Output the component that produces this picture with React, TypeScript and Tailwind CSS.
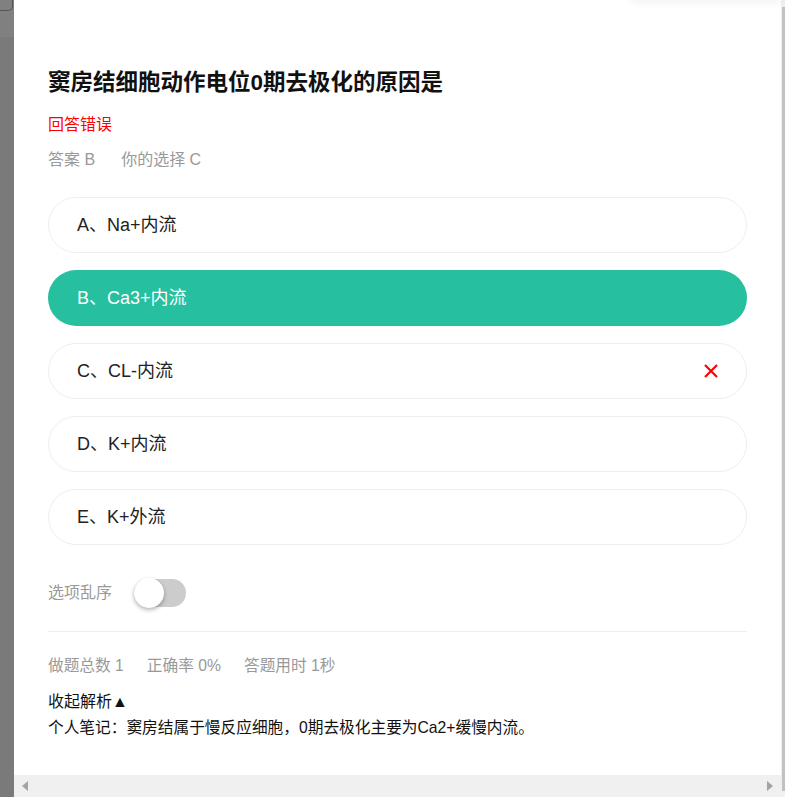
import { useState } from 'react';

const options = [
    { key: 'A', text: 'Na+内流' },
    { key: 'B', text: 'Ca3+内流' },
    { key: 'C', text: 'CL-内流' },
    { key: 'D', text: 'K+内流' },
    { key: 'E', text: 'K+外流' },
];

const answer = 'B';
const chosen = 'C';

export default function App() {
    const [shuffle, setShuffle] = useState(false);

    return (
        <div
            className="w-[785px] h-[797px] flex overflow-hidden bg-white"
            style={{ fontFamily: '"Liberation Sans", "Noto Sans CJK SC", sans-serif' }}
        >
            {/* Dimmed page behind the panel */}
            <div className="w-[14px] flex-shrink-0 flex flex-col bg-[#7a7a7a]">
                <div className="h-[37px] bg-[#808080] relative">
                    <div className="absolute left-0 top-0 w-[13px] h-[11px] border-r border-b border-[#555] rounded-br-[5px]" />
                </div>
            </div>

            <div className="flex-1 flex flex-col min-w-0">
                <div className="flex-1 relative px-[34px] pt-[68px]">
                    {/* faint shadow of a popover above */}
                    <div className="absolute top-[-10px] right-0 w-[150px] h-[10px] shadow-[0_2px_8px_rgba(0,0,0,0.06)]" />

                    <h1 className="text-[22.5px] leading-[30px] font-bold text-[#111]">
                        窦房结细胞动作电位0期去极化的原因是
                    </h1>
                    <div className="mt-[15px] text-[16px] leading-[24px] text-[#ff0000]">回答错误</div>
                    <div className="mt-[11px] text-[16px] leading-[24px] text-[#999] flex">
                        <span className="mr-[26px]">答案 {answer}</span>
                        <span>你的选择 {chosen}</span>
                    </div>

                    <div className="mt-[25px] flex flex-col gap-[17px]">
                        {options.map((o) => {
                            const right = o.key === answer;
                            const wrong = o.key === chosen && !right;
                            return (
                                <div
                                    key={o.key}
                                    className={
                                        right
                                            ? 'h-14 rounded-full flex items-center justify-between pl-[29px] pr-[28px] text-[18px] bg-[#26bfa0] text-white'
                                            : 'h-14 rounded-full flex items-center justify-between pl-[28px] pr-[27px] text-[18px] border border-[#eeeeee] text-[#222]'
                                    }
                                >
                                    <span>
                                        {o.key}、{o.text}
                                    </span>
                                    {wrong && (
                                        <svg width="16" height="16" viewBox="0 0 16 16" fill="none" stroke="#ff0000" strokeWidth="2.2">
                                            <path d="M2 2L14 14M14 2L2 14" />
                                        </svg>
                                    )}
                                </div>
                            );
                        })}
                    </div>

                    <div className="mt-[33px] flex items-center h-[30px]">
                        <span className="text-[16px] text-[#999]">选项乱序</span>
                        <button
                            onClick={() => setShuffle(!shuffle)}
                            className={
                                shuffle
                                    ? 'relative ml-[22px] w-[52px] h-[28px] rounded-full bg-[#26bfa0]'
                                    : 'relative ml-[22px] w-[52px] h-[28px] rounded-full bg-[#cccccc]'
                            }
                        >
                            <span
                                className={
                                    shuffle
                                        ? 'absolute top-[-1px] right-0 w-[30px] h-[30px] rounded-full bg-white shadow-[0_2px_4px_rgba(0,0,0,0.3)]'
                                        : 'absolute top-[-1px] left-0 w-[30px] h-[30px] rounded-full bg-white shadow-[0_2px_4px_rgba(0,0,0,0.3)]'
                                }
                            />
                        </button>
                    </div>

                    <div className="mt-[23px] h-px bg-[#eeeeee]" />

                    <div className="mt-[22px] text-[15.7px] leading-[24px] text-[#999] flex gap-[23px]">
                        <span>做题总数 1</span>
                        <span>正确率 0%</span>
                        <span>答题用时 1秒</span>
                    </div>

                    <div className="mt-[12px] text-[16px] leading-[24px] text-[#111]">收起解析▲</div>
                    <div className="mt-[2px] text-[15.7px] leading-[24px] text-[#111]">
                        个人笔记：窦房结属于慢反应细胞，0期去极化主要为Ca2+缓慢内流。
                    </div>
                </div>

                {/* horizontal scrollbar */}
                <div className="h-[22px] flex-shrink-0 bg-[#f0f0f0] flex items-center justify-between px-[8px]">
                    <svg width="6" height="10" viewBox="0 0 6 10">
                        <path d="M6 0L0 5L6 10Z" fill="#a3a3a3" />
                    </svg>
                    <svg width="6" height="10" viewBox="0 0 6 10">
                        <path d="M0 0L6 5L0 10Z" fill="#a3a3a3" />
                    </svg>
                </div>
            </div>

            {/* vertical scrollbar edge */}
            <div className="w-[4px] flex-shrink-0 bg-[#f0f0f0] flex">
                <div className="ml-[1px] mt-[7px] mb-[6px] w-[3px] bg-[#c1c1c1]" />
            </div>
        </div>
    );
}
